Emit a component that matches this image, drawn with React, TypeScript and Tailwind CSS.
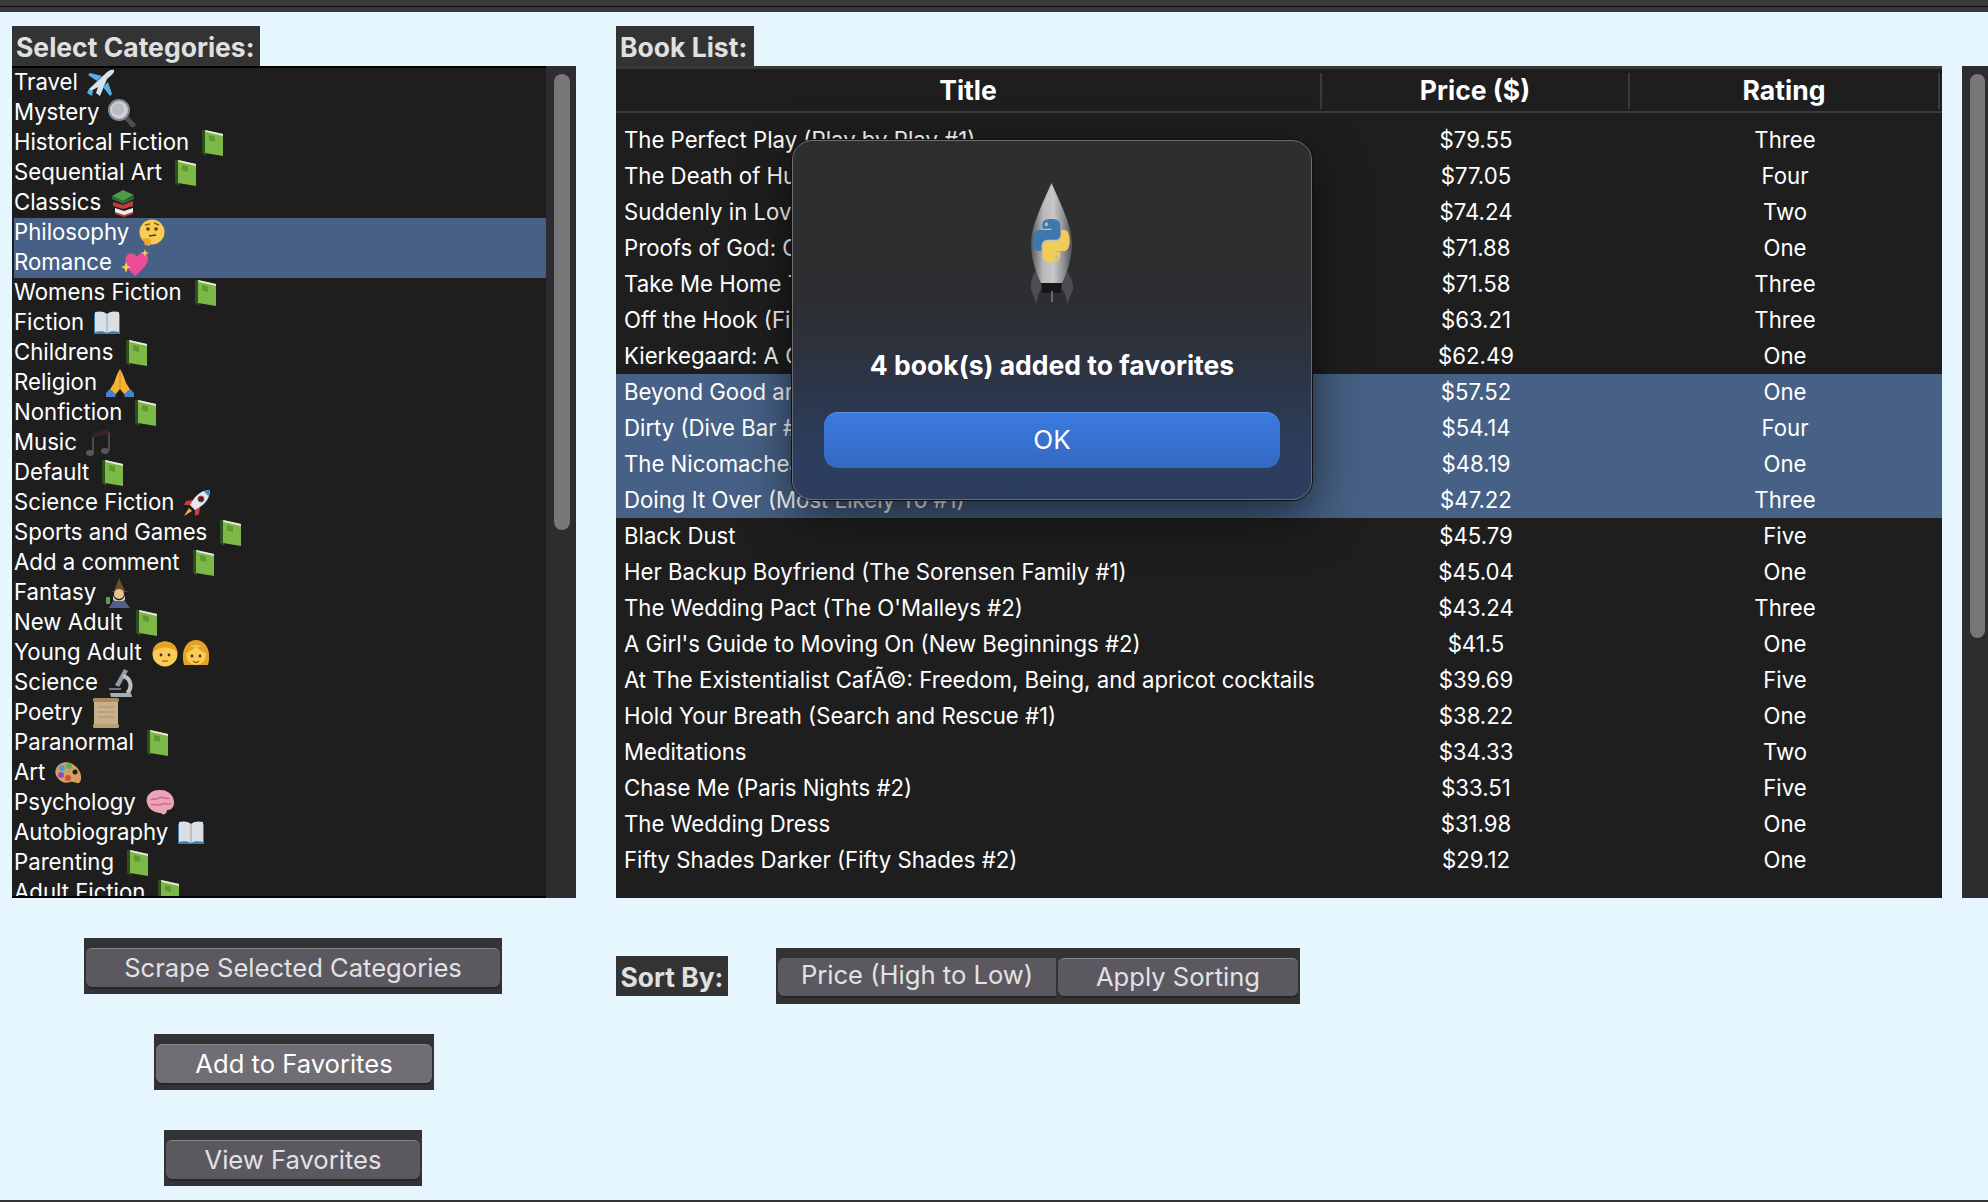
type EmojiKind =
  | "book" | "plane" | "search" | "books" | "think" | "heart" | "open" | "pray"
  | "music" | "rocket" | "mage" | "kids" | "scope" | "scroll" | "palette" | "brain";

const categories: { name: string; emoji: EmojiKind; selected?: boolean }[] = [
  { name: "Travel", emoji: "plane" },
  { name: "Mystery", emoji: "search" },
  { name: "Historical Fiction", emoji: "book" },
  { name: "Sequential Art", emoji: "book" },
  { name: "Classics", emoji: "books" },
  { name: "Philosophy", emoji: "think", selected: true },
  { name: "Romance", emoji: "heart", selected: true },
  { name: "Womens Fiction", emoji: "book" },
  { name: "Fiction", emoji: "open" },
  { name: "Childrens", emoji: "book" },
  { name: "Religion", emoji: "pray" },
  { name: "Nonfiction", emoji: "book" },
  { name: "Music", emoji: "music" },
  { name: "Default", emoji: "book" },
  { name: "Science Fiction", emoji: "rocket" },
  { name: "Sports and Games", emoji: "book" },
  { name: "Add a comment", emoji: "book" },
  { name: "Fantasy", emoji: "mage" },
  { name: "New Adult", emoji: "book" },
  { name: "Young Adult", emoji: "kids" },
  { name: "Science", emoji: "scope" },
  { name: "Poetry", emoji: "scroll" },
  { name: "Paranormal", emoji: "book" },
  { name: "Art", emoji: "palette" },
  { name: "Psychology", emoji: "brain" },
  { name: "Autobiography", emoji: "open" },
  { name: "Parenting", emoji: "book" },
  { name: "Adult Fiction", emoji: "book" },
];

const books = [
  ["The Perfect Play (Play by Play #1)", "$79.55", "Three"],
  ["The Death of Humanity: and the Case for Life", "$77.05", "Four"],
  ["Suddenly in Love (Lake Haven #1)", "$74.24", "Two"],
  ["Proofs of God: Classical Arguments", "$71.88", "One"],
  ["Take Me Home Tonight (Rock Star Romance #3)", "$71.58", "Three"],
  ["Off the Hook (Fishing for Trouble #1)", "$63.21", "Three"],
  ["Kierkegaard: A Christian Missionary", "$62.49", "One"],
  ["Beyond Good and Evil", "$57.52", "One"],
  ["Dirty (Dive Bar #1)", "$54.14", "Four"],
  ["The Nicomachean Ethics", "$48.19", "One"],
  ["Doing It Over (Most Likely To #1)", "$47.22", "Three"],
  ["Black Dust", "$45.79", "Five"],
  ["Her Backup Boyfriend (The Sorensen Family #1)", "$45.04", "One"],
  ["The Wedding Pact (The O'Malleys #2)", "$43.24", "Three"],
  ["A Girl's Guide to Moving On (New Beginnings #2)", "$41.5", "One"],
  ["At The Existentialist CafÃ©: Freedom, Being, and apricot cocktails", "$39.69", "Five"],
  ["Hold Your Breath (Search and Rescue #1)", "$38.22", "One"],
  ["Meditations", "$34.33", "Two"],
  ["Chase Me (Paris Nights #2)", "$33.51", "Five"],
  ["The Wedding Dress", "$31.98", "One"],
  ["Fifty Shades Darker (Fifty Shades #2)", "$29.12", "One"],
];

function Emoji({ kind }: { kind: EmojiKind }) {
  const face = "#f9cd55";
  const hair = "#e6a224";
  switch (kind) {
    case "book":
      return (
        <svg viewBox="0 0 26 28" className="ml-[11px] h-[28px] w-[26px] shrink-0">
          <path d="M2 1 L6 1 L6 27 L2 24 Z" fill="#2c4f22" />
          <path d="M5 1 L23 5 L23 27 L5 24 Z" fill="#7cb845" />
          <path d="M5 1 L23 5 L23 7 L6 3 Z" fill="#e8e8e0" />
          <path d="M9 6 L15 7.5 L15 13 L9 11.5 Z" fill="#5d9a35" />
        </svg>
      );
    case "plane":
      return (
        <svg viewBox="0 0 28 28" className="ml-[9px] h-[28px] w-[28px] shrink-0">
          <path d="M27 1 C24 0 21 2 18 5 L2 20 L4 22 L11 18 L9 24 L13 27 L20 10 C23 7 28 4 27 1 Z" fill="#d7e3ec" />
          <path d="M15 7 L3 4 L1 6 L10 12 Z M21 13 L25 25 L23 27 L16 18 Z" fill="#5aaee8" />
          <path d="M2 20 L0 24 L5 27 L6 22 Z" fill="#5aaee8" />
        </svg>
      );
    case "search":
      return (
        <svg viewBox="0 0 28 28" className="ml-[9px] h-[28px] w-[28px] shrink-0">
          <path d="M15 15 L25 26" stroke="#4c4c54" strokeWidth="5" strokeLinecap="round" />
          <circle cx="11" cy="11" r="10" fill="#cdd0d5" stroke="#85888e" strokeWidth="2" />
          <circle cx="10" cy="10" r="6" fill="#b8bcc2" />
        </svg>
      );
    case "books":
      return (
        <svg viewBox="0 0 26 28" className="ml-[9px] h-[28px] w-[26px] shrink-0">
          <path d="M2 7 L13 1 L24 6 L13 12 Z" fill="#4f9a4a" />
          <path d="M2 7 L13 12 L24 7 L24 10 L13 15 L2 10 Z" fill="#2d6a35" />
          <path d="M3 13 L13 16 L23 12 L23 17 L13 20 L3 17 Z" fill="#c43d3a" />
          <path d="M5 19 L14 22 L23 19 L23 24 L14 27 L5 24 Z" fill="#ececec" />
          <path d="M5 23 L14 26 L23 23 L23 25 L14 28 L5 25 Z" fill="#bc3b3b" />
        </svg>
      );
    case "think":
      return (
        <svg viewBox="0 0 28 28" className="ml-[9px] h-[28px] w-[28px] shrink-0">
          <circle cx="14" cy="13" r="12.500" fill={face} />
          <circle cx="10" cy="10" r="1.800" fill="#5a3b12" />
          <circle cx="18" cy="10" r="1.800" fill="#5a3b12" />
          <path d="M7 6 L12 5 M16 4 L21 6" stroke="#8a5a1c" strokeWidth="1.500" fill="none" />
          <path d="M11 17 L18 16" stroke="#5a3b12" strokeWidth="1.500" />
          <path d="M5 20 C8 18 11 19 13 21 L12 27 L7 26 Z" fill="#eda52b" />
        </svg>
      );
    case "heart":
      return (
        <svg viewBox="0 0 28 28" className="ml-[9px] h-[28px] w-[28px] shrink-0">
          <path d="M14 27 C6 20 3 14 5 8 C7 3 13 3 16 8 C19 2 26 3 27 8 C28 15 20 22 14 27 Z" fill="#ec4c9a" />
          <path d="M5 13 L6.500 17 L10 18 L6.500 19.500 L5 24 L3.500 19.500 L0 18 L3.500 17 Z" fill="#fbd24a" />
          <path d="M24 0 L25 3 L28 4 L25 5 L24 8 L23 5 L20 4 L23 3 Z" fill="#fbd24a" />
        </svg>
      );
    case "open":
      return (
        <svg viewBox="0 0 28 28" className="ml-[9px] h-[28px] w-[28px] shrink-0">
          <path d="M1 5 L13 4 L14 6 L15 4 L27 5 L27 25 L15 25 L13 25 L1 25 Z" fill="#3f7fae" />
          <path d="M2 3 C6 2 11 2 14 5 C17 2 22 2 26 3 L26 23 C22 22 17 22 14 24 C11 22 6 22 2 23 Z" fill="#d9dfe4" />
          <path d="M14 5 L14 24" stroke="#9aa4ad" strokeWidth="1" />
        </svg>
      );
    case "pray":
      return (
        <svg viewBox="0 0 28 28" className="ml-[9px] h-[28px] w-[28px] shrink-0">
          <path d="M14 0 C11 4 10 9 8 14 L3 22 L9 26 L14 20 L19 26 L25 22 L20 14 C18 9 17 4 14 0 Z" fill="#f4b333" />
          <path d="M0 24 L4 20 L10 25 L9 28 L0 28 Z M28 24 L24 20 L18 25 L19 28 L28 28 Z" fill="#4a82c9" />
          <path d="M14 2 L14 20" stroke="#c9851f" strokeWidth="0.800" />
        </svg>
      );
    case "music":
      return (
        <svg viewBox="0 0 26 28" className="ml-[8px] h-[28px] w-[26px] shrink-0">
          <path d="M8 8 L8 24 M24 3 L24 21" stroke="#4a4a4c" strokeWidth="2" />
          <path d="M8 4 L24 0 L24 5 L8 9 Z" fill="#3a2226" />
          <ellipse cx="5" cy="24" rx="4" ry="3" fill="#56565a" />
          <ellipse cx="20" cy="22" rx="4" ry="3" fill="#56565a" />
        </svg>
      );
    case "rocket":
      return (
        <svg viewBox="0 0 28 28" className="ml-[9px] h-[28px] w-[28px] shrink-0">
          <path d="M27 1 C20 1 14 5 10 11 L6 15 L13 22 L17 18 C23 14 27 8 27 1 Z" fill="#e4e8ee" />
          <path d="M27 1 C25 1 23 1.500 21 2.500 L25.500 7 C26.500 5 27 3 27 1 Z" fill="#3d82c9" />
          <circle cx="18" cy="10" r="3" fill="#27323d" stroke="#c23b3b" strokeWidth="1" />
          <path d="M10 11 L3 12 L1 16 L7 16 Z M17 18 L16 25 L12 27 L12 21 Z" fill="#d63c35" />
          <path d="M6 19 L1 27 L9 22 Z" fill="#f5b133" />
        </svg>
      );
    case "mage":
      return (
        <svg viewBox="0 0 26 30" className="ml-[9px] h-[30px] w-[26px] shrink-0">
          <path d="M14 0 L20 13 L24 14 L5 14 L9 13 Z" fill="#6a4d2e" />
          <circle cx="14" cy="16" r="5" fill="#eebf8d" />
          <path d="M8 17 C10 24 18 24 20 17 L20 22 L14 26 L8 22 Z" fill="#c8c4bc" />
          <path d="M4 30 L8 23 L20 23 L25 30 Z" fill="#52608f" />
          <rect x="1" y="19" width="4" height="7" rx="1" fill="#4ea84a" />
        </svg>
      );
    case "kids":
      return (
        <svg viewBox="0 0 58 30" className="ml-[9px] h-[30px] w-[58px] shrink-0">
          <circle cx="14" cy="16" r="12.500" fill={face} />
          <path d="M2 14 C2 0 26 0 26 14 C20 8 9 8 2 14 Z" fill={hair} />
          <circle cx="10" cy="17" r="1.400" fill="#4b2f10" />
          <circle cx="18" cy="17" r="1.400" fill="#4b2f10" />
          <path d="M11 23 L17 23" stroke="#a5561e" strokeWidth="1.200" />
          <path d="M33 27 C29 12 36 2 45 2 C54 2 61 12 57 27 Z" fill={hair} />
          <circle cx="45" cy="17" r="10" fill={face} />
          <path d="M35 15 C40 13 43 11 45 8 C47 11 50 13 55 15 L55 9 L35 9 Z" fill={hair} />
          <circle cx="41" cy="18" r="1.400" fill="#4b2f10" />
          <circle cx="49" cy="18" r="1.400" fill="#4b2f10" />
          <path d="M42 23 C44 25 46 25 48 23" stroke="#a5561e" strokeWidth="1.200" fill="none" />
        </svg>
      );
    case "scope":
      return (
        <svg viewBox="0 0 26 30" className="ml-[9px] h-[30px] w-[26px] shrink-0">
          <path d="M17 1 L21 3 L12 19 L8 17 Z" fill="#8f9aa6" />
          <path d="M16 8 C24 10 26 20 20 25" stroke="#b9c2ca" strokeWidth="4" fill="none" />
          <path d="M3 25 L24 25 L25 29 L4 29 Z" fill="#a4aeb8" />
          <path d="M2 20 L14 20 L14 22 L2 22 Z" fill="#6f7a86" />
        </svg>
      );
    case "scroll":
      return (
        <svg viewBox="0 0 28 30" className="ml-[9px] h-[30px] w-[28px] shrink-0">
          <rect x="2" y="3" width="24" height="24" fill="#c9b08a" />
          <rect x="1" y="0" width="26" height="4" rx="1.500" fill="#a98b63" />
          <rect x="1" y="26" width="26" height="4" rx="1.500" fill="#bb9f78" />
          <path d="M6 9 H22 M6 14 H22 M6 19 H22" stroke="#b39a73" strokeWidth="1.500" />
        </svg>
      );
    case "palette":
      return (
        <svg viewBox="0 0 28 26" className="ml-[9px] h-[26px] w-[28px] shrink-0">
          <path d="M2 9 C4 2 14 0 20 5 C26 9 29 17 26 22 C24 25 20 21 16 22 C12 24 6 22 3 17 C1 14 1 12 2 9 Z" fill="#d4a05c" />
          <circle cx="8" cy="8" r="3" fill="#46a0d8" />
          <circle cx="15" cy="6" r="3" fill="#5cb04f" />
          <circle cx="7" cy="15" r="3" fill="#8e4fc0" />
          <circle cx="21" cy="12" r="2.500" fill="#20201e" />
          <circle cx="14" cy="18" r="3" fill="#d8503c" />
        </svg>
      );
    case "brain":
      return (
        <svg viewBox="0 0 30 28" className="ml-[9px] h-[28px] w-[30px] shrink-0">
          <path d="M2 14 C0 7 6 1 14 1 C23 0 30 7 29 15 C28 20 25 21 22 21 C22 25 18 27 16 24 C12 24 4 22 2 14 Z" fill="#eca3b5" />
          <path d="M6 11 C9 8 11 12 14 9 C17 6 20 11 24 9 M6 16 C10 14 13 18 17 15 C20 13 23 17 26 14" stroke="#c76f88" strokeWidth="1.500" fill="none" />
        </svg>
      );
  }
}

function RocketIcon() {
  return (
    <svg viewBox="0 0 44 122" className="h-[122px] w-[44px]">
      <defs>
        <linearGradient id="hull" x1="0" x2="1" y1="0" y2="0">
          <stop offset="0" stopColor="#55565a" />
          <stop offset="0.3" stopColor="#b9b9ba" />
          <stop offset="0.55" stopColor="#c8c8c8" />
          <stop offset="0.8" stopColor="#8e8f92" />
          <stop offset="1" stopColor="#505155" />
        </linearGradient>
      </defs>
      <path d="M8 84 C3 92 0 98 1 106 L7 122 C7 112 10 106 15 102 Z" fill="#4c4d50" />
      <path d="M34 84 C39 92 44 98 43 106 L37 122 C37 112 33 106 28 102 Z" fill="#4c4d50" />
      <path d="M11 98 L32 98 L31 110 L12 110 Z" fill="#17171a" />
      <path d="M21 108 H23 V119 H21 Z" fill="#6a6a6a" />
      <path d="M21.500 0 C13 20 1 42 1 61 C1 75 6 90 11 100 L32 100 C37 90 42 75 42 61 C42 42 30 20 21.500 0 Z" fill="url(#hull)" />
      <g transform="translate(3,36) scale(0.33,0.385)">
        <path
          fill="#3f78ad"
          d="M54.919 0.001c-4.584.022-8.961.413-12.813 1.095C30.76 3.099 28.7 7.295 28.7 15.032v10.219h26.813v3.406H18.638c-7.793 0-14.616 4.684-16.75 13.594-2.462 10.213-2.571 16.586 0 27.25 1.906 7.938 6.457 13.594 14.25 13.594h9.219v-12.25c0-8.85 7.657-16.656 16.75-16.656h26.781c7.454 0 13.406-6.138 13.406-13.625V15.032c0-7.266-6.13-12.725-13.406-13.937C64.282.328 59.502-.021 54.919.001zm-14.5 8.219c2.77 0 5.031 2.299 5.031 5.125 0 2.816-2.262 5.094-5.031 5.094-2.78 0-5.031-2.278-5.031-5.094 0-2.826 2.251-5.125 5.031-5.125z"
        />
        <path
          fill="#f0cd58"
          d="M85.638 28.657v11.906c0 9.231-7.826 17-16.75 17H42.106c-7.336 0-13.406 6.279-13.406 13.625v25.531c0 7.266 6.319 11.54 13.406 13.625 8.487 2.496 16.626 2.947 26.781 0 6.75-1.954 13.406-5.888 13.406-13.625V86.5H55.513v-3.406H95.7c7.793 0 10.696-5.436 13.406-13.594 2.8-8.399 2.68-16.476 0-27.25-1.926-7.757-5.604-13.594-13.406-13.594zm-15.062 64.656c2.78 0 5.031 2.278 5.031 5.094 0 2.826-2.252 5.125-5.031 5.125-2.77 0-5.031-2.299-5.031-5.125 0-2.816 2.261-5.094 5.031-5.094z"
        />
      </g>
    </svg>
  );
}

function ActionButton({ label, width, active }: { label: string; width: string; active?: boolean }) {
  return (
    <div className={`flex h-[56px] items-end bg-[#333333] px-[2px] pb-[7px] ${width}`}>
      <button
        className={`flex h-[39px] w-full items-center justify-center rounded-[6px] border-t border-t-[#86838a] text-[25.6px] shadow-[0_2px_0_#262626] ${
          active ? "bg-[#706d74] text-white" : "bg-[#5b5860] text-[#e2e2e4]"
        }`}
      >
        {label}
      </button>
    </div>
  );
}

export default function App() {
  return (
    <div className="relative flex h-[1202px] w-[1988px] flex-col overflow-hidden bg-[#e6f6ff] font-[Inter,sans-serif]">
      <div className="flex h-[12px] shrink-0 flex-col bg-[#3a3a3a]">
        <div className="mt-[6px] h-[1px] bg-[#0c0c0c]" />
      </div>

      <div className="flex flex-1 pt-[14px]">
        {/* left column */}
        <div className="ml-[12px] flex w-[564px] flex-col">
          <div className="flex h-[40px] w-[248px] items-center bg-[#333333] pl-[4px] pt-[3px] text-[26.5px] font-bold text-[#e0e0e0]">
            Select Categories:
          </div>
          <div className="flex h-[832px] border-y-2 border-y-black bg-[#1e1e1e]">
            <div className="ml-[2px] h-full w-[532px] overflow-hidden">
              {categories.map((c) => (
                <div
                  key={c.name}
                  className={`flex h-[30px] items-center whitespace-nowrap text-[22.2px] text-white ${
                    c.selected ? "bg-[#466185]" : ""
                  }`}
                >
                  <span className="-mt-[2px]">{c.name}</span>
                  <Emoji kind={c.emoji} />
                </div>
              ))}
            </div>
            <div className="-my-[2px] w-[30px] bg-[#2d2d2f] pl-[8px] pt-[8px]">
              <div className="h-[456px] w-[16px] rounded-full bg-[#77777a]" />
            </div>
          </div>
          <div className="mt-[40px] flex flex-col items-center gap-[40px]">
            <div className="mr-[2px]">
              <ActionButton label="Scrape Selected Categories" width="w-[418px]" />
            </div>
            <ActionButton label="Add to Favorites" width="w-[280px]" active />
            <div className="mr-[2px]">
              <ActionButton label="View Favorites" width="w-[258px]" />
            </div>
          </div>
        </div>

        {/* right column */}
        <div className="ml-[40px] flex w-[1326px] flex-col">
          <div className="flex h-[40px] w-[138px] items-center bg-[#333333] pl-[4px] pt-[3px] text-[26.5px] font-bold text-[#e0e0e0]">
            Book List:
          </div>
          <div className="flex h-[832px] flex-col border-t-[3px] border-t-[#3a3a3a] bg-[#1e1e1e] text-white">
            <div className="flex h-[44px] shrink-0 items-center border-b-2 border-b-[#3a3a3a] pt-[2px] text-[26.5px] font-bold">
              <div className="flex h-[36px] w-[706px] items-center justify-center border-r-2 border-r-[#3a3a3a]">Title</div>
              <div className="flex h-[36px] w-[308px] items-center justify-center border-r-2 border-r-[#3a3a3a]">Price ($)</div>
              <div className="flex h-[36px] w-[310px] items-center justify-center border-r-2 border-r-[#3a3a3a]">Rating</div>
            </div>
            <div className="pt-[9px] text-[22.2px]">
              {books.map(([title, price, rating], i) => (
                <div key={title} className={`flex h-[36px] items-center ${i >= 7 && i <= 10 ? "bg-[#466185]" : ""}`}>
                  <div className="w-[706px] pl-[8px] pr-[5px]">
                    <div className="overflow-hidden whitespace-nowrap">{title}</div>
                  </div>
                  <div className="w-[308px] text-center">{price}</div>
                  <div className="w-[310px] text-center">{rating}</div>
                </div>
              ))}
            </div>
          </div>
          <div className="flex items-center pt-[50px]">
            <div className="flex h-[40px] w-[112px] items-center justify-center bg-[#333333] pt-[3px] text-[26.4px] font-bold text-[#e0e0e0]">
              Sort By:
            </div>
            <div className="ml-[48px] flex h-[56px] w-[524px] items-end gap-[2px] bg-[#333333] px-[2px] pb-[8px]">
              <div className="flex h-[38px] w-[278px] items-start justify-center rounded-l-[6px] bg-[#5b5860] text-[25.6px] leading-[34px] text-[#e2e2e4] shadow-[0_2px_0_#262626]">
                Price (High to Low)
              </div>
              <button className="flex h-[38px] flex-1 items-center justify-center rounded-[6px] border-t border-t-[#86838a] bg-[#5b5860] text-[25.6px] text-[#e2e2e4] shadow-[0_2px_0_#262626]">
                Apply Sorting
              </button>
            </div>
          </div>
        </div>

        {/* third pane, cut by the window edge */}
        <div className="ml-[20px] mt-[40px] flex h-[832px] w-[26px] flex-col self-start bg-[#2d2d2f] pl-[8px] pt-[8px]">
          <div className="h-[564px] w-[15px] rounded-full bg-[#77777a]" />
        </div>
      </div>

      <div className="h-[2px] shrink-0 bg-[#333333]" />

      {/* alert dialog */}
      <div className="absolute left-[792px] top-[140px] flex h-[360px] w-[520px] flex-col items-center rounded-[20px] border border-[#6a6b70] bg-[linear-gradient(180deg,#2e2e30_0%,#2d2e31_45%,#2c3444_65%,#2c3d5c_85%,#2c3e60_100%)] shadow-[0_0_0_1px_#111,0_16px_50px_rgba(0,0,0,0.6)]">
        <div className="mt-[42px]">
          <RocketIcon />
        </div>
        <div className="mt-[42px] text-[26.5px] font-bold leading-[36px] text-white">4 book(s) added to favorites</div>
        <button className="mt-[29px] h-[56px] w-[456px] rounded-[14px] border-t border-t-[#5f93e6] bg-[linear-gradient(180deg,#3c7ae0,#3468c2)] pb-[2px] text-[26px] text-white">
          OK
        </button>
      </div>
    </div>
  );
}
